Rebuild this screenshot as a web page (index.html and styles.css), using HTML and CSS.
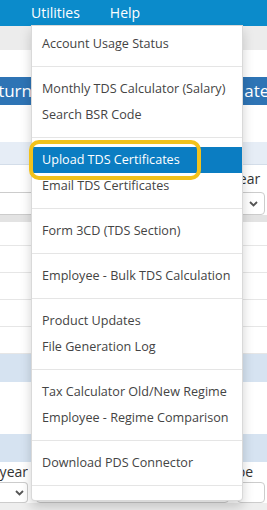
FILE: index.html
```html
<!DOCTYPE html>
<html lang="en">
<head>
    <meta charset="UTF-8">
    <meta name="viewport" content="width=device-width, initial-scale=1.0">
    <title>TDS Utilities</title>
    <link rel="stylesheet" href="styles.css">
</head>
<body>
    <nav class="topnav">
        <div class="nav-item">Utilities
            <ul class="dropdown">
                <li><a href="#">Account Usage Status</a></li>
                <li class="divider"></li>
                <li><a href="#">Monthly TDS Calculator (Salary)</a></li>
                <li><a href="#">Search BSR Code</a></li>
                <li class="divider"></li>
                <li class="active"><a href="#">Upload TDS Certificates</a><span class="annot"></span></li>
                <li><a href="#">Email TDS Certificates</a></li>
                <li class="divider"></li>
                <li><a href="#">Form 3CD (TDS Section)</a></li>
                <li class="divider"></li>
                <li><a href="#">Employee - Bulk TDS Calculation</a></li>
                <li class="divider"></li>
                <li><a href="#">Product Updates</a></li>
                <li><a href="#">File Generation Log</a></li>
                <li class="divider"></li>
                <li><a href="#">Tax Calculator Old/New Regime</a></li>
                <li><a href="#">Employee - Regime Comparison</a></li>
                <li class="divider"></li>
                <li><a href="#">Download PDS Connector</a></li>
                <li class="divider"></li>
            </ul>
        </div>
        <div class="nav-item">Help</div>
    </nav>

    <div class="subbar"></div>
    <div class="spacer"></div>

    <div class="tabs">
        <div class="tab tab-left"><span>Return</span></div>
        <div class="tab"></div>
        <div class="tab tab-right">Update</div>
    </div>

    <div class="gap"></div>
    <div class="band band-top"></div>

    <div class="form form-top">
        <div class="labels">
            <div class="cell"></div>
            <div class="cell"></div>
            <div class="cell cell-right">Year</div>
        </div>
        <div class="selects">
            <div class="select select-left"></div>
            <div class="select"></div>
            <div class="select select-right"><svg width="9" height="6" viewBox="0 0 9 6"><path d="M1 1l3.5 3.5L8 1" fill="none" stroke="#555" stroke-width="1.8"/></svg></div>
        </div>
    </div>

    <div class="section-bar"></div>
    <div class="rows">
        <div class="row row-first"></div>
        <div class="row"></div>
        <div class="row"></div>
        <div class="row"></div>
        <div class="row"></div>
    </div>

    <div class="band"></div>
    <div class="blank"></div>
    <div class="band"></div>

    <div class="form form-bottom">
        <div class="labels">
            <div class="cell cell-left"><span>Financial year</span></div>
            <div class="cell"></div>
            <div class="cell cell-right cell-type">Type</div>
        </div>
        <div class="selects">
            <div class="select select-left"><svg width="9" height="6" viewBox="0 0 9 6"><path d="M1 1l3.5 3.5L8 1" fill="none" stroke="#555" stroke-width="1.8"/></svg></div>
            <div class="select"></div>
            <div class="select select-right"></div>
        </div>
    </div>
    <div class="footer-bar"></div>
</body>
</html>
```

FILE: styles.css
```css
body { margin: 0; width: 267px; height: 510px; overflow: hidden; background: #fff; font-family: "Open Sans", "Noto Sans", sans-serif; color: #333; }

.topnav { display: flex; gap: 30px; height: 26px; padding-left: 31px; background: #0b8bcb; }
.nav-item { position: relative; color: #fff; font-size: 14px; line-height: 26px; }

.dropdown { position: absolute; top: 25px; left: 0; z-index: 10; width: 210px; margin: 0; padding: 5px 0; list-style: none; background: #fff; border: 1px solid rgba(0,0,0,.15); border-radius: 0 0 4px 4px; box-shadow: 0 6px 12px rgba(0,0,0,.175); }
.dropdown li { position: relative; }
.dropdown a { display: block; height: 26px; padding: 0 10px; line-height: 26px; font-size: 12.6px; color: #444; text-decoration: none; white-space: nowrap; }
.dropdown .divider { height: 1px; margin: 9px 0; background: #e5e5e5; }
.dropdown .active a { background: #0b7dc2; color: #fff; }
.annot { position: absolute; left: -3px; top: -7px; width: 172px; height: 40px; box-sizing: border-box; border: 4px solid #f2c21b; border-radius: 10px; }

.subbar { height: 24px; background: #ececec; }
.spacer { height: 27px; }

.tabs { display: grid; grid-template-columns: 32px 212px 1fr; height: 28px; background: #2e74b5; color: #fff; font-size: 17px; line-height: 28px; }
.tab { overflow: hidden; white-space: nowrap; }
.tab-left { display: flex; justify-content: flex-end; }
.tab-right { text-indent: -33px; }

.gap { height: 37px; }
.band { height: 28px; background: #d6e3f1; }
.band-top { height: 22px; background: #e6edf6; border-bottom: 1px solid #d3dde9; }

.form { font-size: 14px; }
.labels, .selects { display: grid; grid-template-columns: 28px 1fr 30px; column-gap: 8px; }
.form-top .labels, .form-top .selects { grid-template-columns: 44px 1fr 30px; }
.labels { height: 27px; line-height: 27px; }
.cell { overflow: hidden; white-space: nowrap; }
.cell-left { display: flex; justify-content: flex-end; }
.cell-right { margin-left: -6px; }
.selects { height: 23px; }
.select { display: flex; align-items: center; justify-content: flex-end; padding-right: 6px; border: 1px solid #ccc; border-radius: 4px; background: #fff; }
.select-left { border-left: none; border-radius: 0 4px 4px 0; padding-right: 3px; }
.select-right { margin-right: 2px; }

.section-bar { height: 7px; background: #e3e3e3; }
.rows .row { height: 26px; border-bottom: 1px solid #e6e6e6; }
.rows .row-first { height: 23px; }

.blank { height: 52px; }

.form-bottom .labels { height: 20px; line-height: 20px; }
.form-bottom .selects { height: 21px; }
.cell-type { margin-left: -15px; }
.footer-bar { height: 10px; background: #eee; }
```
